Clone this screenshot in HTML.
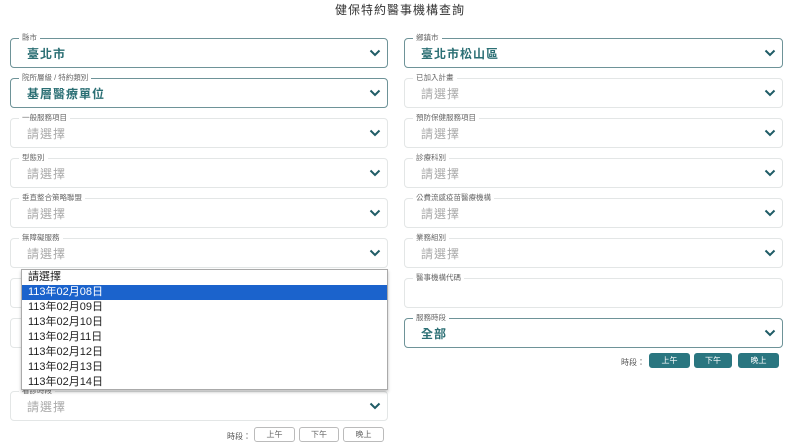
<!DOCTYPE html>
<html><head><meta charset="utf-8"><style>
*{box-sizing:border-box;margin:0;padding:0}
body{width:800px;height:448px;background:#fff;position:relative;overflow:hidden;font-family:"Liberation Sans","Noto Sans CJK TC",sans-serif}
.t{position:absolute;top:1px;left:0;width:800px;text-align:center;font-size:12px;color:#333;letter-spacing:1px}
.f{position:absolute;height:30px;border:1px solid #e3e6e6;border-radius:4px}
.f.s{border-color:#6e9398}
.f .l{position:absolute;top:-6px;left:8px;background:#fff;padding:0 3px;font-size:7.5px;color:#666;line-height:9px}
.f .v{position:absolute;left:16px;top:6px;font-size:12px;color:#aaa;letter-spacing:1px}
.f.s .v{color:#2b6f74;font-weight:bold;font-size:12px}
.f svg{position:absolute;right:6px;top:10px}
.L{left:10px;width:378px}.R{left:404px;width:379px}
.dd{position:absolute;left:21px;top:269px;width:367px;height:121px;background:#fff;border:1px solid #aaa;box-shadow:0 2px 3px rgba(0,0,0,.25);font-size:11px;color:#222}
.dd div{height:15px;line-height:15px;padding-left:6px}
.dd .h{background:#1b63cc;color:#fff}
.b{position:absolute;height:15px;font-size:8px;line-height:13px;text-align:center;border-radius:3px}
.bo{border:1px solid #bbb;color:#666;background:#fff}
.bf{background:#2a7680;color:#fff;border:1px solid #2a7680}
.lb{position:absolute;font-size:8px;color:#555}
</style></head><body>
<div class="t">健保特約醫事機構查詢</div>
<svg width="0" height="0" style="position:absolute"><defs><symbol id="c" viewBox="0 0 12 8"><path d="M1.5 1.5L6 6L10.5 1.5" fill="none" stroke="#1f5c66" stroke-width="2"/></symbol></defs></svg>

<div class="f L s" style="top:38px"><span class="l">縣市</span><span class="v">臺北市</span><svg width="12" height="8"><use href="#c"/></svg></div>
<div class="f L s" style="top:78px"><span class="l">院所層級 / 特約類別</span><span class="v">基層醫療單位</span><svg width="12" height="8"><use href="#c"/></svg></div>
<div class="f L" style="top:118px"><span class="l">一般服務項目</span><span class="v">請選擇</span><svg width="12" height="8"><use href="#c"/></svg></div>
<div class="f L" style="top:158px"><span class="l">型態別</span><span class="v">請選擇</span><svg width="12" height="8"><use href="#c"/></svg></div>
<div class="f L" style="top:198px"><span class="l">垂直整合策略聯盟</span><span class="v">請選擇</span><svg width="12" height="8"><use href="#c"/></svg></div>
<div class="f L" style="top:238px"><span class="l">無障礙服務</span><span class="v">請選擇</span><svg width="12" height="8"><use href="#c"/></svg></div>
<div class="f L" style="top:278px"></div>
<div class="f L" style="top:318px"></div>
<div class="f L" style="top:391px"><span class="l">看診時段</span><span class="v">請選擇</span><svg width="12" height="8"><use href="#c"/></svg></div>

<div class="f R s" style="top:38px"><span class="l">鄉鎮市</span><span class="v">臺北市松山區</span><svg width="12" height="8"><use href="#c"/></svg></div>
<div class="f R" style="top:78px"><span class="l">已加入計畫</span><span class="v">請選擇</span><svg width="12" height="8"><use href="#c"/></svg></div>
<div class="f R" style="top:118px"><span class="l">預防保健服務項目</span><span class="v">請選擇</span><svg width="12" height="8"><use href="#c"/></svg></div>
<div class="f R" style="top:158px"><span class="l">診療科別</span><span class="v">請選擇</span><svg width="12" height="8"><use href="#c"/></svg></div>
<div class="f R" style="top:198px"><span class="l">公費流感疫苗醫療機構</span><span class="v">請選擇</span><svg width="12" height="8"><use href="#c"/></svg></div>
<div class="f R" style="top:238px"><span class="l">業務組別</span><span class="v">請選擇</span><svg width="12" height="8"><use href="#c"/></svg></div>
<div class="f R" style="top:278px"><span class="l">醫事機構代碼</span></div>
<div class="f R s" style="top:318px"><span class="l">服務時段</span><span class="v">全部</span><svg width="12" height="8"><use href="#c"/></svg></div>

<span class="lb" style="left:621px;top:357px">時段：</span>
<div class="b bf" style="left:649px;top:353px;width:41px">上午</div>
<div class="b bf" style="left:694px;top:353px;width:38px">下午</div>
<div class="b bf" style="left:738px;top:353px;width:41px">晚上</div>

<span class="lb" style="left:227px;top:431px">時段：</span>
<div class="b bo" style="left:254px;top:427px;width:41px">上午</div>
<div class="b bo" style="left:299px;top:427px;width:40px">下午</div>
<div class="b bo" style="left:343px;top:427px;width:41px">晚上</div>

<div class="dd">
<div>請選擇</div>
<div class="h">113年02月08日</div>
<div>113年02月09日</div>
<div>113年02月10日</div>
<div>113年02月11日</div>
<div>113年02月12日</div>
<div>113年02月13日</div>
<div>113年02月14日</div>
</div>
</body></html>
